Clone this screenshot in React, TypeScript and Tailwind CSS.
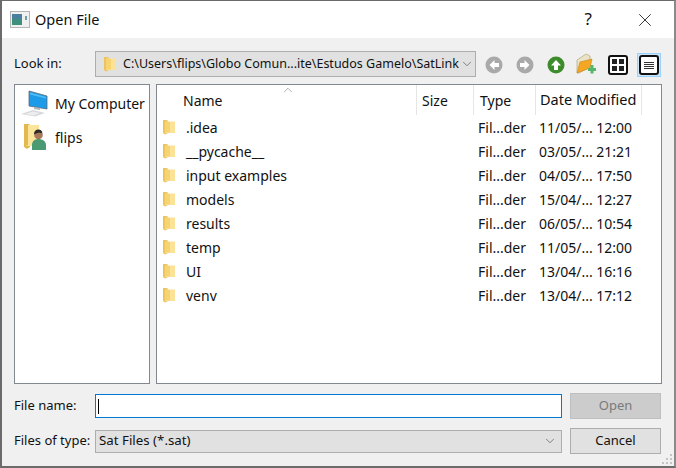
import React from 'react';
import { ChevronDown, ChevronUp, X } from 'lucide-react';

const files = [
  { name: '.idea', date: '11/05/... 12:00' },
  { name: '__pycache__', date: '03/05/... 21:21' },
  { name: 'input examples', date: '04/05/... 17:50' },
  { name: 'models', date: '15/04/... 12:27' },
  { name: 'results', date: '06/05/... 10:54' },
  { name: 'temp', date: '11/05/... 12:00' },
  { name: 'UI', date: '13/04/... 16:16' },
  { name: 'venv', date: '13/04/... 17:12' },
];

const Folder = ({ className }: { className?: string }) => (
  <svg viewBox="0 0 12 16" className={className}>
    <path d="M0 1h4l1 1v12l-3 1.5L0 14z" fill="#ecc35c" />
    <path d="M2.500 2.500h9.500V14H1.500L2.500 13z" fill="#fbe296" />
    <path d="M3 3h4v10.500H2.500z" fill="#f8d470" />
  </svg>
);

const WindowIcon = () => (
  <svg viewBox="0 0 20 17" className="w-5 h-[17px]">
    <rect x="0.5" y="0.5" width="19" height="16" fill="#f0f0f0" stroke="#b5b5b5" />
    <rect x="2" y="3" width="10" height="11" fill="#3f8f7f" />
    <rect x="2" y="3" width="10" height="5" fill="#4a7fa0" />
    <rect x="15" y="5" width="2" height="4" fill="#6f9fae" />
  </svg>
);

const Computer = () => (
  <svg viewBox="0 0 30 27" className="w-[30px] h-[27px]">
    <path d="M9 1l18 5v13l-18-3z" fill="#1c9be8" stroke="#5a6b7a" strokeWidth="0.8" />
    <path d="M10 2.500l16 4.500v1.500L10 4.500z" fill="#52bdf5" />
    <path d="M14 17l6 1v2l-6-1z" fill="#b0b4b8" />
    <path d="M1 24l12-4 12 3-10 3.500z" fill="#d5d8da" />
    <path d="M5 24l8-2.600 7 1.700-6.500 2.300z" fill="#eceeee" />
  </svg>
);

const UserFolder = () => (
  <svg viewBox="0 0 24 28" className="w-6 h-7">
    <path d="M1 1h5l1 1v22l-3 2-3-2z" fill="#e3b94f" />
    <path d="M5 2h11v21H3l2-1z" fill="#fbe59a" />
    <path d="M9 22c0-4 3-6 6.500-6s7.500 2 7.500 6v5H9z" fill="#4b9b72" />
    <circle cx="15.500" cy="12" r="4.300" fill="#a8785a" />
    <path d="M11 11.500c0-4 2.500-5 4.500-5s4 1.500 3.800 4c-2-1.500-5-1-8.300 1z" fill="#2c2a28" />
  </svg>
);

const NavArrow = ({ dir, color }: { dir: 'left' | 'right' | 'up'; color: string }) => (
  <svg viewBox="0 0 18 18" className="w-[18px] h-[18px]">
    <circle cx="9" cy="9" r="8.500" fill={color} />
    {dir === 'left' && <path d="M9.500 4L4.500 9l5 5v-3H14V7H9.500z" fill="#fff" />}
    {dir === 'right' && <path d="M8.500 4l5 5-5 5v-3H4V7h4.500z" fill="#fff" />}
    {dir === 'up' && <path d="M4 9.500L9 4l5 5.500h-3V14H7V9.500z" fill="#fff" />}
  </svg>
);

const NewFolder = () => (
  <svg viewBox="0 0 20 22" className="w-5 h-[22px]">
    <path d="M1 7l9-6 4 2v11L3 20H1z" fill="#e9e3c8" stroke="#a99a6a" strokeWidth="0.6" />
    <path d="M1 20l3-11 12-3-2 9z" fill="#f5a623" stroke="#c98518" strokeWidth="0.6" />
    <path d="M14.500 12h3v3h2.500v3h-2.500v2.500h-3V18H12v-3h2.500z" fill="#55b56a" />
  </svg>
);

const Header = ({ label, className }: { label: string; className: string }) => (
  <div className={`border-r border-[#e5e5e5] flex items-center h-full ${className}`}>{label}</div>
);

export default function App() {
  return (
    <div
      className="w-[676px] h-[468px] bg-[#f0f0f0] border-2 border-t border-[#6b6b6b] border-r-[#8a8a8a] text-[14px] text-[#111] overflow-hidden relative"
      style={{ fontFamily: '"Noto Sans", "Open Sans", sans-serif' }}
    >
      {/* title bar */}
      <div className="h-[37px] bg-white flex items-center pl-2">
        <WindowIcon />
        <span className="ml-[5px] text-[14.500px] leading-none mb-[1px]">Open File</span>
        <span className="ml-auto text-[17px] mr-[42px] mb-[1px]">?</span>
        <X size={22} strokeWidth={0.9} className="mr-[18px] text-[#111]" />
      </div>

      {/* look in */}
      <div className="flex items-center mt-[13px] h-[26px] pl-3">
        <span className="w-[81px] text-[13px]">Look in:</span>
        <div className="w-[381px] h-[26px] bg-[#e1e1e1] border border-[#adadad] flex items-center pl-2 text-[12.500px] whitespace-nowrap">
          <Folder className="w-3 h-4 shrink-0" />
          <span className="ml-[7px] w-[337px] overflow-hidden">C:\Users\flips\Globo Comun...ite\Estudos Gamelo\SatLink</span>
          <ChevronDown size={14} strokeWidth={1.2} className="text-[#555] shrink-0" />
        </div>
        <div className="ml-[9px] mt-[2px]"><NavArrow dir="left" color="#a9a9a9" /></div>
        <div className="ml-[13px] mt-[2px]"><NavArrow dir="right" color="#a9a9a9" /></div>
        <div className="ml-[13px] mt-[2px]"><NavArrow dir="up" color="#3d8b2a" /></div>
        <div className="ml-[11px]"><NewFolder /></div>
        <div className="ml-[12px] mt-[2px] w-5 h-5 border-2 border-[#111] rounded-[3px] bg-white grid grid-cols-2 gap-[2px] p-[2px]">
          <span className="bg-[#222]" /><span className="bg-[#222]" /><span className="bg-[#222]" /><span className="bg-[#222]" />
        </div>
        <div className="ml-[9px] mt-[2px] w-6 h-6 bg-[#cce4f7] border border-[#99d1ff] flex items-center justify-center">
          <div className="w-5 h-5 border-2 border-[#111] rounded-[3px] bg-white flex flex-col justify-center gap-[1px] px-[3px]">
            <span className="h-[1px] bg-[#333]" /><span className="h-[1px] bg-[#333]" /><span className="h-[1px] bg-[#333]" /><span className="h-[1px] bg-[#333]" />
          </div>
        </div>
      </div>

      {/* panels */}
      <div className="flex mt-[7px] pl-3 gap-[6px] h-[300px]">
        <div className="w-[136px] bg-white border border-[#828790] pt-[4px]">
          <div className="flex items-center h-[29px] pl-[5px] gap-[5px]">
            <Computer />
            <span className="text-[14px] whitespace-nowrap">My Computer</span>
          </div>
          <div className="flex items-center h-[28px] mt-[5px] pl-[8px] gap-[8px]">
            <UserFolder />
            <span className="text-[14px]">flips</span>
          </div>
        </div>
        <div className="w-[506px] bg-white border border-[#828790] relative">
          <ChevronUp size={14} strokeWidth={1} className="absolute left-[124px] -top-[2px] text-[#777]" />
          <div className="flex h-[30px] text-[14px] items-center">
            <Header label="Name" className="w-[260px] pl-[26px]" />
            <Header label="Size" className="w-[57px] pl-[5px]" />
            <Header label="Type" className="w-[62px] pl-[6px]" />
            <Header label="Date Modified" className="w-[106px] pl-[4px] whitespace-nowrap text-[14.500px]" />
          </div>
          {files.map((f) => (
            <div key={f.name} className="flex items-center h-6 text-[14px]">
              <div className="w-[317px] flex items-center pl-[6px]">
                <Folder className="w-3 h-4 shrink-0" />
                <span className="ml-[11px]">{f.name}</span>
              </div>
              <span className="w-[62px] pl-[4px] text-[14px]">Fil...der</span>
              <span className="pl-[3px] text-[14px] whitespace-nowrap">{f.date}</span>
            </div>
          ))}
        </div>
      </div>

      {/* file name */}
      <div className="flex items-center pl-3 mt-[9px] h-[26px]">
        <span className="w-[81px] text-[13px]">File name:</span>
        <div className="w-[467px] h-[24px] bg-white border border-[#0078d7] flex items-center pl-[2px]">
          <span className="w-[1px] h-[15px] bg-black" />
        </div>
        <button className="ml-2 w-[91px] h-[26px] bg-[#cccccc] border border-[#bfbfbf] text-[13px] text-[#7a7a7a]">Open</button>
      </div>

      {/* file type */}
      <div className="flex items-center pl-3 mt-[9px] h-[26px]">
        <span className="w-[81px] text-[13px] whitespace-nowrap">Files of type:</span>
        <div className="w-[467px] h-[23px] bg-[#e1e1e1] border border-[#adadad] flex items-center pl-[3px] pr-[4px] text-[13.300px]">
          <span>Sat Files (*.sat)</span>
          <ChevronDown size={14} strokeWidth={1.2} className="ml-auto text-[#555]" />
        </div>
        <button className="ml-2 w-[91px] h-[26px] bg-[#e1e1e1] border border-[#adadad] text-[13px]">Cancel</button>
      </div>

      {/* size grip */}
      <svg viewBox="0 0 11 11" className="absolute right-[1px] bottom-[1px] w-[11px] h-[11px]">
        <path d="M8 0h2v2H8zM4 4h2v2H4zM8 4h2v2H8zM0 8h2v2H0zM4 8h2v2H4zM8 8h2v2H8z" fill="#c4c4c4" />
      </svg>
    </div>
  );
}
